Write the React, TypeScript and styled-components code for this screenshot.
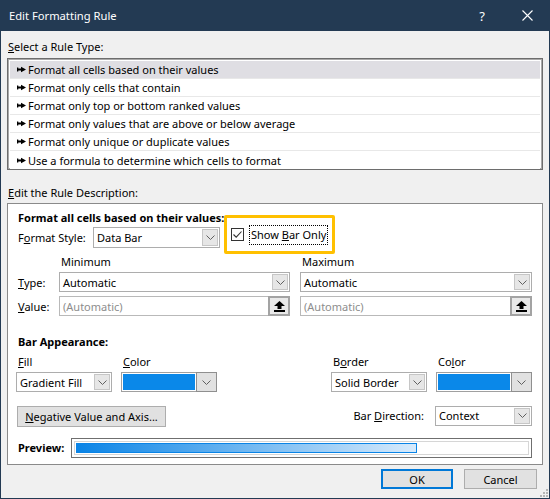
import styled, { createGlobalStyle } from 'styled-components'

const GlobalStyle = createGlobalStyle`
  html, body {
    margin: 0;
    padding: 0;
    background: #f0f0f0;
  }
  body {
    font-family: 'Noto Sans', 'Open Sans', sans-serif;
    font-size: 11px;
    color: #000;
  }
  * {
    box-sizing: border-box;
  }
`

const Window = styled.div`
  position: relative;
  width: 550px;
  height: 499px;
  background: #f0f0f0;
  border: 1px solid #233a53;
  border-top: none;
  display: flex;
  flex-direction: column;
`

const TitleBar = styled.div`
  height: 31px;
  margin: 0 -1px;
  background: #233a53;
  color: #fff;
  display: flex;
  align-items: center;
  padding-left: 9px;
  font-size: 11.2px;
`

const CaptionButton = styled.div<{ $w: number }>`
  width: ${(p) => p.$w}px;
  height: 100%;
  display: flex;
  align-items: center;
  justify-content: center;
  font-size: 13px;
  &:first-of-type {
    margin-left: auto;
  }
`

const Content = styled.div`
  flex: 1;
  display: flex;
  flex-direction: column;
  padding: 0 6px;
`

const SectionLabel = styled.div<{ $mt: number }>`
  margin-top: ${(p) => p.$mt}px;
  line-height: 16px;
  padding-left: 1px;
`

const U = styled.span`
  text-decoration: underline;
  text-underline-offset: 1px;
`

const RuleList = styled.div`
  margin-top: 3px;
  background: #fff;
  border: 1px solid #6d6d6d;
  box-shadow: inset 0 0 0 1px #a9a9a9;
  padding: 2px 2px 0 2px;
`

const RuleItem = styled.div<{ $selected?: boolean }>`
  height: 18px;
  display: flex;
  align-items: center;
  gap: 2px;
  padding-left: 7px;
  background: ${(p) => (p.$selected ? '#dfdee3' : '#fff')};
  border-bottom: 1px solid #e8e8e8;
  &:last-child {
    border-bottom: none;
  }
`

const Panel = styled.div`
  margin-top: 2px;
  background: #fff;
  border: 1px solid #8a8a8a;
  padding: 6px 10px 6px 10px;
  display: flex;
  flex-direction: column;
`

const Bold = styled.div<{ $mt?: number }>`
  margin-top: ${(p) => p.$mt ?? 0}px;
  font-weight: bold;
  line-height: 16px;
`

const StyleRow = styled.div`
  margin-top: 1px;
  height: 21px;
  display: flex;
  align-items: center;
`

const FieldLabel = styled.div<{ $w: number }>`
  width: ${(p) => p.$w}px;
  flex-shrink: 0;
`

const Combo = styled.div<{ $w: number; $h: number }>`
  width: ${(p) => p.$w}px;
  height: ${(p) => p.$h}px;
  flex-shrink: 0;
  background: #fff;
  border: 1px solid #adadad;
  display: flex;
  align-items: center;
  padding-left: 3px;
`

const ComboText = styled.span<{ $muted?: boolean }>`
  flex: 1;
  color: ${(p) => (p.$muted ? '#8d8d8d' : '#000')};
  white-space: nowrap;
`

const ComboArrow = styled.div`
  width: 16px;
  height: calc(100% - 2px);
  margin-right: 1px;
  background: #e6e6e6;
  border: 1px solid #c6c6c6;
  display: flex;
  align-items: center;
  justify-content: center;
`

const Highlight = styled.div`
  margin: -12px 0 -6px 4px;
  height: 39px;
  border: 3px solid #ffc000;
  border-radius: 2px;
  padding: 0 4px 0 4px;
  display: flex;
  align-items: center;
  gap: 5px;
`

const CheckBox = styled.div`
  width: 13px;
  height: 13px;
  border: 1px solid #333;
  background: #fff;
  display: flex;
  align-items: center;
  justify-content: center;
`

const FocusText = styled.span`
  border: 1px dotted #000;
  padding: 1px 1px;
  line-height: 16px;
`

const MinMaxRow = styled.div<{ $mt: number; $h: number }>`
  margin-top: ${(p) => p.$mt}px;
  height: ${(p) => p.$h}px;
  display: flex;
  align-items: center;
`

const ColHead = styled.div<{ $w: number; $ml?: number }>`
  width: ${(p) => p.$w}px;
  margin-left: ${(p) => p.$ml ?? 0}px;
  padding-left: 2px;
  line-height: 16px;
`

const Spacer = styled.div`
  width: 10px;
  flex-shrink: 0;
`

const ValueBox = styled.div<{ $w: number }>`
  width: ${(p) => p.$w}px;
  height: 100%;
  border: 1px solid #b9b9b9;
  background: #fff;
  display: flex;
  align-items: center;
  padding-left: 3px;
`

const PickButton = styled.div`
  width: 22px;
  height: calc(100% + 2px);
  margin: -1px -1px -1px 0;
  background: #e9e9e9;
  border: 2px solid #a3a3a3;
  display: flex;
  align-items: center;
  justify-content: center;
`

const BarGrid = styled.div`
  margin: 4px 0 0 -2px;
  display: flex;
  justify-content: space-between;
`

const BarPair = styled.div`
  display: flex;
  gap: 9px;
`

const BarField = styled.div`
  width: 96px;
  display: flex;
  flex-direction: column;
  gap: 2px;
`

const BarLabel = styled.div`
  padding-left: 2px;
  line-height: 16px;
`

const ColorPicker = styled.div`
  height: 20px;
  border: 1px solid #a0a0a0;
  background: #fff;
  padding: 1px 0 1px 1px;
  display: flex;
`

const Swatch = styled.div<{ $color: string }>`
  flex: 1;
  background: ${(p) => p.$color};
`

const ColorArrow = styled.div`
  width: 21px;
  margin: -2px -1px -2px 1px;
  background: #e1e1e1;
  border: 1px solid #8f8f8f;
  display: flex;
  align-items: center;
  justify-content: center;
`

const ActionRow = styled.div`
  margin: 14px 0 0 -1px;
  height: 21px;
  display: flex;
  align-items: center;
  justify-content: space-between;
`

const Button = styled.div<{ $w: number; $h: number; $default?: boolean }>`
  width: ${(p) => p.$w}px;
  height: ${(p) => p.$h}px;
  background: #e1e1e1;
  border: ${(p) => (p.$default ? '2px solid #0078d7' : '1px solid #adadad')};
  display: flex;
  align-items: center;
  justify-content: center;
  white-space: nowrap;
`

const DirectionGroup = styled.div`
  display: flex;
  align-items: center;
  gap: 11px;
  margin-top: -2px;
`

const PreviewRow = styled.div`
  margin-top: 11px;
  height: 20px;
  display: flex;
  align-items: center;
`

const PreviewBox = styled.div`
  flex: 1;
  height: 100%;
  border: 1px solid #6f6f6f;
  padding: 2px;
`

const PreviewInner = styled.div`
  height: 100%;
  border: 1px solid #d6d6d6;
  padding: 1px;
`

const PreviewBar = styled.div<{ $pct: number }>`
  width: ${(p) => p.$pct}%;
  height: 100%;
  border: 1px solid #0a84e6;
  background: linear-gradient(to right, #0a84e6, #d8ebfc);
`

const Footer = styled.div`
  margin-top: 4px;
  padding-right: 6px;
  display: flex;
  justify-content: flex-end;
  gap: 11px;
`

const Grip = styled.svg`
  position: absolute;
  right: 1px;
  bottom: 1px;
`

const Chevron = () => (
  <svg width="9" height="5" viewBox="0 0 9 5">
    <polyline points="0.5,0.5 4.5,4.5 8.5,0.5" fill="none" stroke="#606060" strokeWidth="1" />
  </svg>
)

const UploadIcon = () => (
  <svg width="11" height="11" viewBox="0 0 11 11">
    <polygon points="5.5,0 11,5 7.5,5 7.5,8 3.5,8 3.5,5 0,5" fill="#000" />
    <rect x="0" y="9" width="11" height="2" fill="#000" />
  </svg>
)

const Bullet = () => (
  <svg width="9" height="7" viewBox="0 0 9 7">
    <path d="M0 1.5 L1.3 1.5 L1.3 2.6 L4 2.6 L4 0.8 L9 3.5 L4 6.2 L4 4.4 L1.3 4.4 L1.3 5.5 L0 5.5 Z" fill="#000" />
  </svg>
)

const rules = [
  'Format all cells based on their values',
  'Format only cells that contain',
  'Format only top or bottom ranked values',
  'Format only values that are above or below average',
  'Format only unique or duplicate values',
  'Use a formula to determine which cells to format',
]

const barBlue = '#0a88e9'

export default function App() {
  return (
    <>
      <GlobalStyle />
      <Window>
        <TitleBar>
          <span>Edit Formatting Rule</span>
          <CaptionButton $w={44}>?</CaptionButton>
          <CaptionButton $w={46}>
            <svg width="11" height="11" viewBox="0 0 11 11">
              <path d="M0.5 0.5 L10.5 10.5 M10.5 0.5 L0.5 10.5" stroke="#fff" strokeWidth="1.1" />
            </svg>
          </CaptionButton>
        </TitleBar>
        <Content>
          <SectionLabel $mt={8}>
            <U>S</U>elect a Rule Type:
          </SectionLabel>
          <RuleList>
            {rules.map((r, i) => (
              <RuleItem key={r} $selected={i === 0}>
                <Bullet />
                <span>{r}</span>
              </RuleItem>
            ))}
          </RuleList>
          <SectionLabel $mt={15}>
            <U>E</U>dit the Rule Description:
          </SectionLabel>
          <Panel>
            <Bold>Format all cells based on their values:</Bold>
            <StyleRow>
              <FieldLabel $w={75}>
                F<U>o</U>rmat Style:
              </FieldLabel>
              <Combo $w={127} $h={21}>
                <ComboText>Data Bar</ComboText>
                <ComboArrow>
                  <Chevron />
                </ComboArrow>
              </Combo>
              <Highlight>
                <CheckBox>
                  <svg width="11" height="11" viewBox="0 0 11 11">
                    <polyline points="1.5,5.5 4.2,8.2 9.5,2.5" fill="none" stroke="#333" strokeWidth="1.1" />
                  </svg>
                </CheckBox>
                <FocusText>
                  Show <U>B</U>ar Only
                </FocusText>
              </Highlight>
            </StyleRow>
            <MinMaxRow $mt={6} $h={16}>
              <ColHead $w={231} $ml={41}>Minimum</ColHead>
              <Spacer />
              <ColHead $w={232}>Maximum</ColHead>
            </MinMaxRow>
            <MinMaxRow $mt={2} $h={20}>
              <FieldLabel $w={41}>
                <U>T</U>ype:
              </FieldLabel>
              <Combo $w={231} $h={20}>
                <ComboText>Automatic</ComboText>
                <ComboArrow>
                  <Chevron />
                </ComboArrow>
              </Combo>
              <Spacer />
              <Combo $w={232} $h={20}>
                <ComboText>Automatic</ComboText>
                <ComboArrow>
                  <Chevron />
                </ComboArrow>
              </Combo>
            </MinMaxRow>
            <MinMaxRow $mt={4} $h={20}>
              <FieldLabel $w={41}>
                <U>V</U>alue:
              </FieldLabel>
              <ValueBox $w={231}>
                <ComboText $muted>(Automatic)</ComboText>
                <PickButton>
                  <UploadIcon />
                </PickButton>
              </ValueBox>
              <Spacer />
              <ValueBox $w={232}>
                <ComboText $muted>(Automatic)</ComboText>
                <PickButton>
                  <UploadIcon />
                </PickButton>
              </ValueBox>
            </MinMaxRow>
            <Bold $mt={18}>Bar Appearance:</Bold>
            <BarGrid>
              <BarPair>
                <BarField>
                  <BarLabel>
                    <U>F</U>ill
                  </BarLabel>
                  <Combo $w={96} $h={20}>
                    <ComboText>Gradient Fill</ComboText>
                    <ComboArrow>
                      <Chevron />
                    </ComboArrow>
                  </Combo>
                </BarField>
                <BarField>
                  <BarLabel>
                    <U>C</U>olor
                  </BarLabel>
                  <ColorPicker>
                    <Swatch $color={barBlue} />
                    <ColorArrow>
                      <Chevron />
                    </ColorArrow>
                  </ColorPicker>
                </BarField>
              </BarPair>
              <BarPair>
                <BarField>
                  <BarLabel>
                    B<U>o</U>rder
                  </BarLabel>
                  <Combo $w={96} $h={20}>
                    <ComboText>Solid Border</ComboText>
                    <ComboArrow>
                      <Chevron />
                    </ComboArrow>
                  </Combo>
                </BarField>
                <BarField>
                  <BarLabel>
                    Co<U>l</U>or
                  </BarLabel>
                  <ColorPicker>
                    <Swatch $color={barBlue} />
                    <ColorArrow>
                      <Chevron />
                    </ColorArrow>
                  </ColorPicker>
                </BarField>
              </BarPair>
            </BarGrid>
            <ActionRow>
              <Button $w={149} $h={21}>
                <span>
                  <U>N</U>egative Value and Axis...
                </span>
              </Button>
              <DirectionGroup>
                <span>
                  Bar <U>D</U>irection:
                </span>
                <Combo $w={97} $h={20}>
                  <ComboText>Context</ComboText>
                  <ComboArrow>
                    <Chevron />
                  </ComboArrow>
                </Combo>
              </DirectionGroup>
            </ActionRow>
            <PreviewRow>
              <FieldLabel $w={53}>
                <Bold>Preview:</Bold>
              </FieldLabel>
              <PreviewBox>
                <PreviewInner>
                  <PreviewBar $pct={75.5} />
                </PreviewInner>
              </PreviewBox>
            </PreviewRow>
          </Panel>
          <Footer>
            <Button $w={72} $h={20} $default>
              OK
            </Button>
            <Button $w={73} $h={20}>
              Cancel
            </Button>
          </Footer>
        </Content>
        <Grip width="9" height="9" viewBox="0 0 9 9">
          {[
            [7, 1],
            [4, 4],
            [7, 4],
            [1, 7],
            [4, 7],
            [7, 7],
          ].map(([x, y]) => (
            <rect key={`${x}-${y}`} x={x} y={y} width="2" height="2" fill="#b5b5b5" />
          ))}
        </Grip>
      </Window>
    </>
  )
}
